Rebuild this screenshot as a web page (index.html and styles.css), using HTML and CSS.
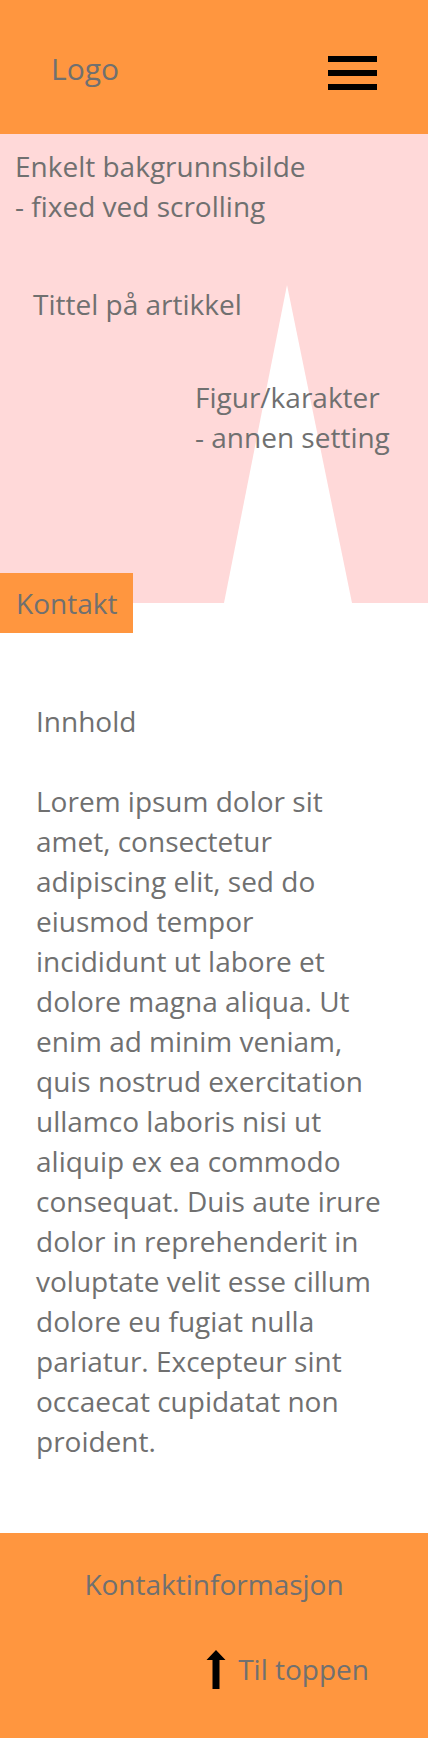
FILE: index.html
```html
<!DOCTYPE html>
<html lang="no">
<head>
<meta charset="utf-8">
<title>Artikkel</title>
<link rel="stylesheet" href="styles.css">
</head>
<body>
<header class="topbar">
  <div class="logo">Logo</div>
  <button class="burger" aria-label="Meny"><span></span><span></span><span></span></button>
</header>
<section class="hero">
  <svg class="figure" viewBox="0 0 128 318" preserveAspectRatio="none" aria-hidden="true"><polygon points="63,0 128,318 0,318" fill="#fff"/></svg>
  <p class="bg-note">Enkelt bakgrunnsbilde<br>- fixed ved scrolling</p>
  <h1 class="title">Tittel på artikkel</h1>
  <p class="fig-note">Figur/karakter<br>- annen setting</p>
  <a class="contact-tab" href="#kontakt">Kontakt</a>
</section>
<main class="content">
  <p class="lead">Innhold</p>
  <p class="text">Lorem ipsum dolor sit amet, consectetur adipiscing elit, sed do eiusmod tempor incididunt ut labore et dolore magna aliqua. Ut enim ad minim veniam, quis nostrud exercitation ullamco laboris nisi ut aliquip ex ea commodo consequat. Duis aute irure dolor in reprehenderit in voluptate velit esse cillum dolore eu fugiat nulla pariatur. Excepteur sint occaecat cupidatat non proident.</p>
</main>
<footer class="footer" id="kontakt">
  <p class="footer-info">Kontaktinformasjon</p>
  <a class="to-top" href="#">
    <svg class="arrow" viewBox="0 0 20 39" aria-hidden="true"><path d="M10 0 L19.5 10 L13.5 10 L13.5 39 L6.5 39 L6.5 10 L0.5 10 Z" fill="#000"/></svg>
    <span>Til toppen</span>
  </a>
</footer>
</body>
</html>
```

FILE: styles.css
```css
* { box-sizing: border-box; }
html, body { margin: 0; padding: 0; }
body {
  font-family: "Open Sans", "Noto Sans", sans-serif;
  font-size: 28px;
  line-height: 40px;
  color: #707070;
  background: #fff;
}
p, h1 { margin: 0; font-weight: normal; font-size: 28px; }

.topbar {
  height: 134px;
  background: #ff963f;
  display: flex;
  align-items: center;
  justify-content: space-between;
  padding: 0 51px 0 51px;
}
.logo { font-size: 30px; line-height: 40px; margin-top: 3px; }
.burger {
  background: none;
  border: 0;
  padding: 0;
  width: 49px;
  display: flex;
  flex-direction: column;
  gap: 8px;
  margin-top: 11px;
}
.burger span { display: block; height: 6px; background: #000; }

.hero {
  position: relative;
  height: 469px;
  background: #ffd9d9;
  padding: 12px 0 0 0;
  display: flex;
  flex-direction: column;
  align-items: flex-start;
}
.figure {
  position: absolute;
  left: 224px;
  top: 151px;
  width: 128px;
  height: 318px;
}
.bg-note { position: relative; margin-left: 15px; }
.title { position: relative; margin: 58px 0 0 33px; }
.fig-note { position: relative; margin: 53px 0 0 195px; }
.contact-tab {
  position: absolute;
  left: 0;
  top: 439px;
  height: 60px;
  line-height: 60px;
  padding: 0 16px 0 16px;
  width: 133px;
  background: #ff963f;
  color: #707070;
  text-decoration: none;
  z-index: 2;
}

.content { padding: 98px 37px 72px 36px; }
.lead { margin-bottom: 40px; }

.footer {
  background: #ff963f;
  height: 205px;
  padding: 31px 59px 0 0;
  display: flex;
  flex-direction: column;
}
.footer-info { text-align: center; padding-left: 59px; }
.to-top {
  margin-top: 44px;
  align-self: flex-end;
  display: flex;
  align-items: center;
  gap: 12px;
  color: #707070;
  text-decoration: none;
}
.arrow { width: 20px; height: 39px; margin-top: 2px; }
```
